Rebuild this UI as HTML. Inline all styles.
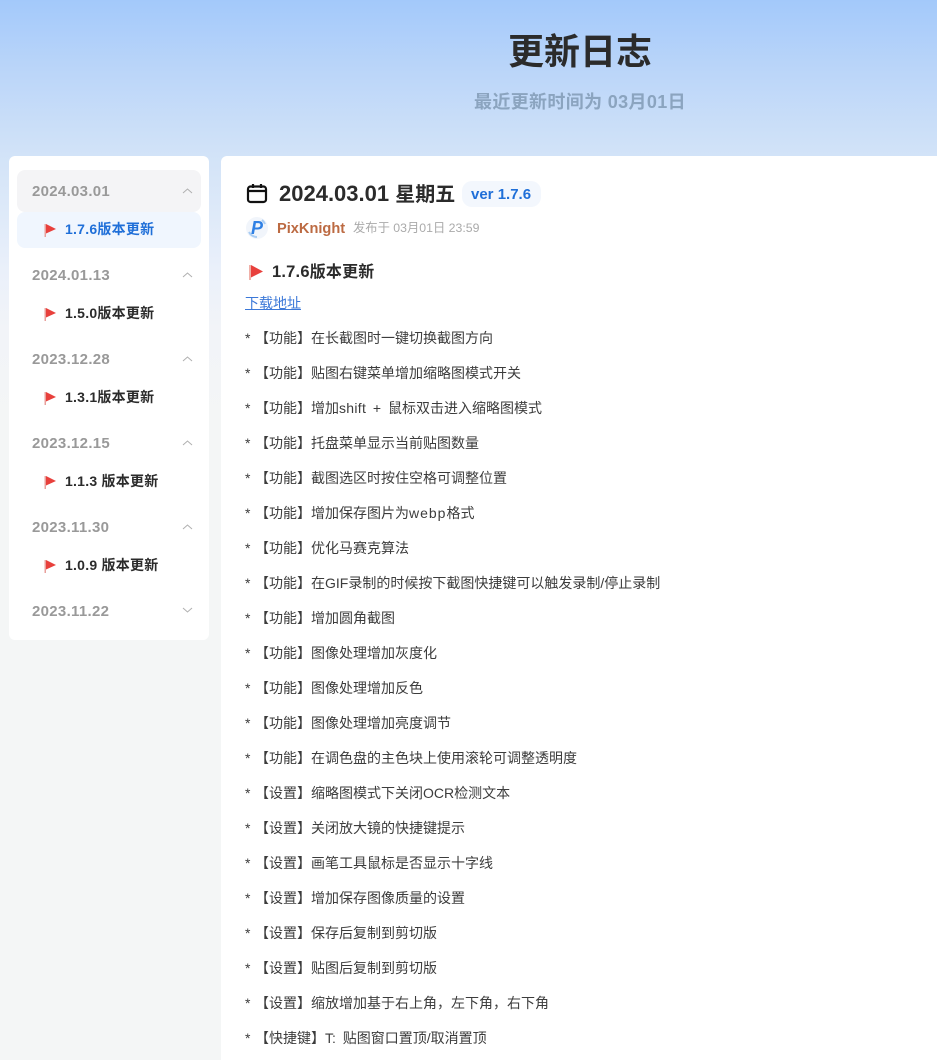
<!DOCTYPE html>
<html lang="zh"><head><meta charset="utf-8"><style>
html,body{margin:0;padding:0}
body{width:937px;height:1060px;overflow:hidden;position:relative;background:linear-gradient(180deg,#a3c9fa 0,#bcd6f9 75px,#d2e3f8 155px,#eaf0fa 270px,#f2f4f8 330px,#f4f6f6 430px,#f4f6f6 1060px);font-family:"Liberation Sans","Noto Sans CJK SC",sans-serif;color:#333}
.a{position:absolute;white-space:nowrap}
h1{margin:0;left:508px;top:28px;font-size:36px;line-height:48px;font-weight:700;color:#2b2b2b}
.sub{left:474px;top:91px;font-size:18px;line-height:22px;font-weight:700;color:#8ba4bf;letter-spacing:.35px}
.side{left:9px;top:156px;width:200px;height:484px;background:#fff;border-radius:6px}
.main{left:221px;top:156px;width:716px;height:904px;background:#fff;border-radius:6px 0 0 0}
.d{left:32px;font-size:15px;line-height:20px;font-weight:700;color:#999;letter-spacing:.3px}
.v{left:65px;font-size:14px;line-height:20px;font-weight:700;color:#2b2b2b;letter-spacing:.25px}
.r{left:245px;font-size:14px;line-height:20px;color:#3c3c3c}
.r i{display:inline-block;width:10px;font-style:normal}
</style></head><body>
<h1 class="a">更新日志</h1>
<div class="a sub">最近更新时间为 03月01日</div>
<div class="a side"></div>
<div class="a main"></div>
<div class="a" style="left:17px;top:170px;width:184px;height:42px;background:#f4f4f6;border-radius:8px"></div>
<div class="a" style="left:17px;top:212px;width:184px;height:36px;background:#f0f6fe;border-radius:8px"></div>
<div class="a d" style="top:182px">2024.03.01</div>
<div class="a d" style="top:266px">2024.01.13</div>
<div class="a d" style="top:350px">2023.12.28</div>
<div class="a d" style="top:434px">2023.12.15</div>
<div class="a d" style="top:518px">2023.11.30</div>
<div class="a d" style="top:602px">2023.11.22</div>
<svg class="a" style="left:0;top:0" width="220" height="640" fill="none" stroke="#b0b0b0" stroke-width="1">
<path d="M183 193l4.500-4 4.500 4M183 277l4.500-4 4.500 4M183 361l4.500-4 4.500 4M183 445l4.500-4 4.500 4M183 529l4.500-4 4.500 4M183 608l4.500 4 4.500-4"/>
<g stroke="none">
<path fill="#e8403c" d="M46 224l10 5-10 4.500z"/><path fill="#e8a09c" d="M44.500 224h1.500v13h-1.500z"/>
<path fill="#e8403c" d="M46 308l10 5-10 4.500z"/><path fill="#e8a09c" d="M44.500 308h1.500v13h-1.500z"/>
<path fill="#e8403c" d="M46 392l10 5-10 4.500z"/><path fill="#e8a09c" d="M44.500 392h1.500v13h-1.500z"/>
<path fill="#e8403c" d="M46 476l10 5-10 4.500z"/><path fill="#e8a09c" d="M44.500 476h1.500v13h-1.500z"/>
<path fill="#e8403c" d="M46 560l10 5-10 4.500z"/><path fill="#e8a09c" d="M44.500 560h1.500v13h-1.500z"/>
</g></svg>
<div class="a v" style="top:219px;color:#1f6fd8">1.7.6版本更新</div>
<div class="a v" style="top:303px">1.5.0版本更新</div>
<div class="a v" style="top:387px">1.3.1版本更新</div>
<div class="a v" style="top:471px">1.1.3 版本更新</div>
<div class="a v" style="top:555px">1.0.9 版本更新</div>

<svg class="a" style="left:246px;top:183px" width="22" height="22" fill="none" stroke="#111" stroke-width="2.200"><rect x="2" y="3.500" width="18" height="15.500" rx="2.500"/><path d="M2 8h18M7 1v4M15 1v4"/></svg>
<div class="a" style="left:279px;top:179px;font-size:22px;line-height:30px;font-weight:700;color:#2b2b2b">2024.03.01 <span style="font-size:20px">星期五</span></div>
<div class="a" style="left:462px;top:181px;width:79px;height:26px;background:#f3f7fd;border-radius:10px"></div>
<div class="a" style="left:471px;top:185px;font-size:15px;line-height:20px;font-weight:700;color:#1f6fd8">ver 1.7.6</div>
<div class="a" style="left:246px;top:217px;width:22px;height:22px;border-radius:50%;background:#f1f5fb"></div>
<svg class="a" style="left:246px;top:217px" width="22" height="22" fill="none"><path d="M3 15a9 9 0 0 0 8 5" stroke="#a9cdf3" stroke-width="2"/><path d="M16 3a9 9 0 0 1 3 4" stroke="#a9cdf3" stroke-width="2"/></svg>
<div class="a" style="left:251px;top:217px;font-size:18px;line-height:22px;font-weight:700;font-style:italic;color:#2f80e4">P</div>
<div class="a" style="left:277px;top:219px;font-size:14.600px;line-height:20px;font-weight:700;color:#bc6a42">PixKnight</div>
<div class="a" style="left:353px;top:219px;font-size:12.300px;line-height:18px;color:#aaa">发布于 03月01日 23:59</div>
<svg class="a" style="left:248px;top:264px" width="16" height="17"><path fill="#e8403c" d="M3 1l12 6.500-12 6z"/><path fill="#f0b0a8" d="M1 1h2v15H1z"/></svg>
<div class="a" style="left:272px;top:261px;font-size:16.500px;line-height:22px;font-weight:700;color:#2b2b2b;letter-spacing:.2px">1.7.6<span style="font-size:16px">版本更新</span></div>
<div class="a" style="left:245px;top:293px;font-size:14px;line-height:20px;color:#3b78d8;text-decoration:underline">下载地址</div>
<div class="a r" style="top:328px"><i>*</i>【功能】在长截图时一键切换截图方向</div>
<div class="a r" style="top:363px"><i>*</i>【功能】贴图右键菜单增加缩略图模式开关</div>
<div class="a r" style="top:398px"><i>*</i>【功能】增加<span style="letter-spacing:.3px;word-spacing:2.500px">shift + </span>鼠标双击进入缩略图模式</div>
<div class="a r" style="top:433px"><i>*</i>【功能】托盘菜单显示当前贴图数量</div>
<div class="a r" style="top:468px"><i>*</i>【功能】截图选区时按住空格可调整位置</div>
<div class="a r" style="top:503px"><i>*</i>【功能】增加保存图片为<span style="letter-spacing:1px">webp</span>格式</div>
<div class="a r" style="top:538px"><i>*</i>【功能】优化马赛克算法</div>
<div class="a r" style="top:573px"><i>*</i>【功能】在GIF录制的时候按下截图快捷键可以触发录制/停止录制</div>
<div class="a r" style="top:608px"><i>*</i>【功能】增加圆角截图</div>
<div class="a r" style="top:643px"><i>*</i>【功能】图像处理增加灰度化</div>
<div class="a r" style="top:678px"><i>*</i>【功能】图像处理增加反色</div>
<div class="a r" style="top:713px"><i>*</i>【功能】图像处理增加亮度调节</div>
<div class="a r" style="top:748px"><i>*</i>【功能】在调色盘的主色块上使用滚轮可调整透明度</div>
<div class="a r" style="top:783px"><i>*</i>【设置】缩略图模式下关闭OCR检测文本</div>
<div class="a r" style="top:818px"><i>*</i>【设置】关闭放大镜的快捷键提示</div>
<div class="a r" style="top:853px"><i>*</i>【设置】画笔工具鼠标是否显示十字线</div>
<div class="a r" style="top:888px"><i>*</i>【设置】增加保存图像质量的设置</div>
<div class="a r" style="top:923px"><i>*</i>【设置】保存后复制到剪切版</div>
<div class="a r" style="top:958px"><i>*</i>【设置】贴图后复制到剪切版</div>
<div class="a r" style="top:993px"><i>*</i>【设置】缩放增加基于右上角，左下角，右下角</div>
<div class="a r" style="top:1028px"><i>*</i>【快捷键】<span style="word-spacing:3px">T: </span>贴图窗口置顶/取消置顶</div>
</body></html>
